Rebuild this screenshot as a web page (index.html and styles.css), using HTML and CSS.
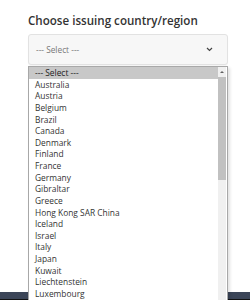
FILE: index.html
```html
<!DOCTYPE html>
<html>
<head>
<meta charset="utf-8">
<link rel="stylesheet" href="styles.css">
</head>
<body>
<div class="page">
  <main class="content">
    <h1 class="title">Choose issuing country/region</h1>
    <div class="field">
      <div class="select">
        <span class="select-text">--- Select ---</span>
        <svg class="chevron" width="7" height="5" viewBox="0 0 7 5"><path d="M1 1 L3.5 3.5 L6 1" fill="none" stroke="#444" stroke-width="1.2"/></svg>
      </div>
      <div class="menu">
        <ul class="options">
          <li class="option selected">--- Select ---</li>
          <li class="option">Australia</li>
          <li class="option">Austria</li>
          <li class="option">Belgium</li>
          <li class="option">Brazil</li>
          <li class="option">Canada</li>
          <li class="option">Denmark</li>
          <li class="option">Finland</li>
          <li class="option">France</li>
          <li class="option">Germany</li>
          <li class="option">Gibraltar</li>
          <li class="option">Greece</li>
          <li class="option">Hong Kong SAR China</li>
          <li class="option">Iceland</li>
          <li class="option">Israel</li>
          <li class="option">Italy</li>
          <li class="option">Japan</li>
          <li class="option">Kuwait</li>
          <li class="option">Liechtenstein</li>
          <li class="option">Luxembourg</li>
        </ul>
        <div class="scrollbar">
          <div class="arrow up"></div>
          <div class="track"><div class="thumb"></div></div>
          <div class="arrow down"></div>
        </div>
      </div>
    </div>
  </main>
  <footer class="footer"></footer>
</div>
</body>
</html>
```
FILE: styles.css
```css
html, body {
  margin: 0;
  padding: 0;
  background: #fff;
}
.page {
  height: 300px;
  display: flex;
  flex-direction: column;
  overflow: hidden;
  font-family: "Open Sans", "Noto Sans", sans-serif;
}
.content {
  flex: 1;
  padding: 13px 22px 0 28px;
}
.title {
  margin: 0;
  font-size: 11.6px;
  line-height: 16px;
  font-weight: 600;
  color: #333;
}
.field {
  position: relative;
  margin-top: 5px;
  width: 200px;
}
.select {
  height: 29px;
  border: 1px solid #e2e2e2;
  border-radius: 3px;
  background: #f7f7f7;
  box-shadow: 0 1px 1px rgba(0,0,0,0.04);
  display: flex;
  align-items: center;
  justify-content: space-between;
  padding: 0 14px 0 7px;
}
.select-text {
  font-size: 8.3px;
  color: #777;
}
.chevron {
  display: block;
}
.menu {
  position: absolute;
  left: 0;
  top: 32px;
  width: 198px;
  height: 240px;
  background: #fff;
  border: 1px solid #a8a8a8;
  box-shadow: 2px 2px 3px rgba(0,0,0,0.12);
  display: flex;
  z-index: 2;
}
.options {
  list-style: none;
  margin: 0;
  padding: 0;
  flex: 1;
}
.option {
  font-size: 8.4px;
  line-height: 11.63px;
  color: #333;
  padding-left: 6px;
  white-space: nowrap;
}
.option.selected {
  background: #c8c8c8;
  color: #222;
}
.scrollbar {
  width: 8px;
  margin-right: 1px;
  background: #f0f0f0;
  display: flex;
  flex-direction: column;
}
.arrow {
  height: 10px;
  position: relative;
}
.arrow::after {
  content: "";
  position: absolute;
  left: 2px;
  border-left: 2px solid transparent;
  border-right: 2px solid transparent;
}
.arrow.up::after {
  top: 4px;
  border-bottom: 2px solid #606060;
}
.arrow.down::after {
  top: 4px;
  border-top: 2px solid #606060;
}
.track {
  flex: 1;
}
.thumb {
  height: 103px;
  background: #c1c1c1;
}
.footer {
  height: 8px;
  background: #3b4558;
  border-bottom: 1px solid #111;
  box-sizing: border-box;
}
```
